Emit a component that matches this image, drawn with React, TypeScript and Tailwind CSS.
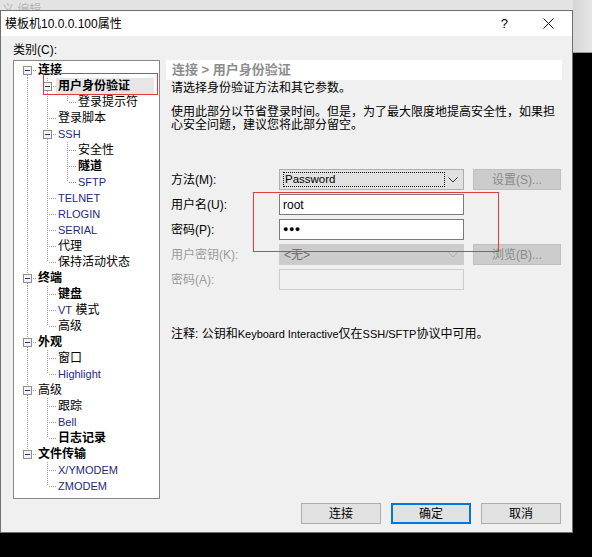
import React from "react";

type N = {
  label: React.ReactNode;
  bold?: boolean;
  en?: boolean;
  selected?: boolean;
  children?: N[];
};

const EN = ({ children }: { children: React.ReactNode }) => (
  <span className="font-['Liberation_Sans',sans-serif] text-[11px] text-[#1e2a78]">{children}</span>
);

const L = ({ children }: { children: React.ReactNode }) => (
  <span className="font-['Liberation_Sans',sans-serif] text-[11px]">{children}</span>
);

const tree: N[] = [
  {
    label: "连接",
    bold: true,
    children: [
      { label: "用户身份验证", bold: true, selected: true, children: [{ label: "登录提示符" }] },
      { label: "登录脚本" },
      {
        label: "SSH",
        en: true,
        children: [{ label: "安全性" }, { label: "隧道", bold: true }, { label: "SFTP", en: true }],
      },
      { label: "TELNET", en: true },
      { label: "RLOGIN", en: true },
      { label: "SERIAL", en: true },
      { label: "代理" },
      { label: "保持活动状态" },
    ],
  },
  {
    label: "终端",
    bold: true,
    children: [
      { label: "键盘", bold: true },
      {
        label: (
          <>
            <EN>VT</EN> 模式
          </>
        ),
      },
      { label: "高级" },
    ],
  },
  { label: "外观", bold: true, children: [{ label: "窗口" }, { label: "Highlight", en: true }] },
  { label: "高级", children: [{ label: "跟踪" }, { label: "Bell", en: true }, { label: "日志记录", bold: true }] },
  { label: "文件传输", bold: true, children: [{ label: "X/YMODEM", en: true }, { label: "ZMODEM", en: true }] },
];

type Flat = { n: N; depth: number; cont: boolean[]; hasNext: boolean; first: boolean };

function flatten(nodes: N[], depth: number, cont: boolean[], out: Flat[]) {
  nodes.forEach((n, i) => {
    const hasNext = i < nodes.length - 1;
    out.push({ n, depth, cont: [...cont], hasNext, first: depth === 0 && i === 0 });
    if (n.children) flatten(n.children, depth + 1, [...cont, hasNext], out);
  });
  return out;
}

const LINE = "#a0a0a0";

function TreeLines({ f }: { f: Flat }) {
  const d = f.depth;
  const w = 20 * (d + 1);
  const cx = 20 * d + 9.5;
  const box = !!f.n.children;
  const els: React.ReactNode[] = [];
  f.cont.forEach((c, i) => {
    if (c)
      els.push(
        <line key={"v" + i} x1={20 * i + 9.5} y1={0} x2={20 * i + 9.5} y2={16} stroke={LINE} strokeDasharray="1 1" />
      );
  });
  if (!f.first)
    els.push(<line key="top" x1={cx} y1={0} x2={cx} y2={box ? 4 : 8} stroke={LINE} strokeDasharray="1 1" />);
  if (f.hasNext)
    els.push(<line key="bot" x1={cx} y1={box ? 13 : 8} x2={cx} y2={16} stroke={LINE} strokeDasharray="1 1" />);
  els.push(
    <line key="h" x1={box ? 20 * d + 15 : cx + 1} y1={8.5} x2={20 * d + 19} y2={8.5} stroke={LINE} strokeDasharray="1 1" />
  );
  if (box) {
    els.push(
      <rect key="b" x={20 * d + 5.5} y={4.5} width={8} height={8} fill="#f4f4f4" stroke="#8f8f8f" />,
      <line key="m" x1={20 * d + 7} y1={8.5} x2={20 * d + 12} y2={8.5} stroke="#24378a" />
    );
  }
  return (
    <svg width={w} height={16} className="shrink-0" shapeRendering="crispEdges">
      {els}
    </svg>
  );
}

function TreeRow({ f }: { f: Flat }) {
  const n = f.n;
  const cls = n.bold ? "font-bold text-black" : "text-black";
  return (
    <div className="flex h-[16px] items-center pl-[4px]">
      <TreeLines f={f} />
      <span
        className={
          "whitespace-nowrap text-[12px] leading-[16px] " +
          cls +
          (n.selected ? " -ml-[2px] w-[98px] bg-[#e6e6e6] pl-[2px]" : "")
        }
      >
        {n.en ? <EN>{n.label}</EN> : n.label}
      </span>
    </div>
  );
}

function Chevron({ color }: { color: string }) {
  return (
    <svg width="10" height="6" viewBox="0 0 10 6">
      <path d="M0.5 0.5 L5 5 L9.5 0.5" fill="none" stroke={color} strokeWidth="1" />
    </svg>
  );
}

function Btn({ children, primary, disabled, w }: { children: React.ReactNode; primary?: boolean; disabled?: boolean; w: string }) {
  return (
    <div
      className={
        "flex h-[21px] items-center justify-center text-[12px] " +
        w +
        " " +
        (disabled
          ? "border border-[#bfbfbf] bg-[#cccccc] text-[#8a8a8a]"
          : primary
          ? "border-2 border-[#0078d7] bg-[#e1e1e1] text-black"
          : "border border-[#adadad] bg-[#e1e1e1] text-black")
      }
    >
      {children}
    </div>
  );
}

export default function App() {
  const flat = flatten(tree, 0, [], []);
  return (
    <div className="flex h-[557px] w-[592px] overflow-hidden bg-black font-['Liberation_Sans','Noto_Sans_CJK_SC',sans-serif] text-[12px] text-black">
      <div className="flex w-[573px] flex-col">
        <div className="h-[10px] overflow-hidden bg-[#e3e3e3] pl-[2px]">
          <div className="pt-[3px] text-[12px] leading-[14px] text-[#b4b4b4]">义 编辑</div>
        </div>
        <div className="flex h-[523px] flex-col border border-[#707070] bg-[#f0f0f0]">
          {/* title bar */}
          <div className="flex h-[25px] items-center bg-white pl-[4px] pr-[18px]">
            <span className="text-[12px]">模板机10.0.0.100属性</span>
            <span className="ml-auto text-[13px] leading-none">?</span>
            <svg width="11" height="11" viewBox="0 0 11 11" className="ml-[35px]">
              <path d="M0.5 0.5 L10.5 10.5 M10.5 0.5 L0.5 10.5" stroke="#111" strokeWidth="1" />
            </svg>
          </div>
          {/* client */}
          <div className="flex flex-1 flex-col">
            <div className="flex">
              <div className="flex flex-col pl-[12px]">
                <div className="mt-[7px] h-[14px] text-[12px] leading-[14px]">类别(C):</div>
                <div className="relative mt-[3px] h-[439px] w-[147px] border border-[#828790] bg-white pt-[1px]">
                  {flat.map((f, i) => (
                    <TreeRow key={i} f={f} />
                  ))}
                  <div className="absolute left-[29px] top-[12px] h-[22px] w-[115px] border border-[#e33b3b]" />
                </div>
              </div>
              <div className="relative ml-[6px] mt-[24px] w-[396px]">
                <div className="h-[20px] bg-white pl-[6px] text-[13px] font-bold leading-[20px] text-[#8c8c8c]">
                  连接 &gt; 用户身份验证
                </div>
                <div className="mt-[1px] pl-[5px] text-[12px] leading-[14px]">请选择身份验证方法和其它参数。</div>
                <div className="mt-[11px] pl-[5px] text-[12px] leading-[13px]">
                  使用此部分以节省登录时间。但是，为了最大限度地提高安全性，如果担
                  <br />
                  心安全问题，建议您将此部分留空。
                </div>
                <div className="mt-[37px] flex flex-col gap-[4px] pl-[5px]">
                  <div className="flex h-[21px] items-center">
                    <span className="w-[108px]">方法(M):</span>
                    <div className="flex h-[21px] w-[185px] items-center border border-[#adadad] bg-[#e1e1e1] pl-[3px] pr-[5px]">
                      <div className="flex h-[15px] w-[162px] items-center border border-dotted border-black pl-[1px] text-[11.5px]">
                        Password
                      </div>
                      <div className="ml-auto">
                        <Chevron color="#333" />
                      </div>
                    </div>
                    <div className="ml-[9px]">
                      <Btn disabled w="w-[88px]">
                        设置(S)...
                      </Btn>
                    </div>
                  </div>
                  <div className="flex h-[21px] items-center">
                    <span className="w-[108px]">用户名(U):</span>
                    <div className="flex h-[21px] w-[185px] items-center border border-[#7a7a7a] bg-white pl-[3px]">root</div>
                  </div>
                  <div className="flex h-[21px] items-center">
                    <span className="w-[108px]">密码(P):</span>
                    <div className="flex h-[21px] w-[185px] items-center border border-[#7a7a7a] bg-white pl-[3px] text-[9px] tracking-[0.5px]">
                      ●●●
                    </div>
                  </div>
                  <div className="flex h-[21px] items-center">
                    <span className="w-[108px] text-[#9a9a9a]">用户密钥(K):</span>
                    <div className="flex h-[21px] w-[185px] items-center border border-[#cccccc] bg-[#cccccc] pl-[4px] pr-[5px] text-[#6f6f6f]">
                      &lt;无&gt;
                      <div className="ml-auto">
                        <Chevron color="#b0b0b0" />
                      </div>
                    </div>
                    <div className="ml-[9px]">
                      <Btn disabled w="w-[88px]">
                        浏览(B)...
                      </Btn>
                    </div>
                  </div>
                  <div className="flex h-[21px] items-center">
                    <span className="w-[108px] text-[#9a9a9a]">密码(A):</span>
                    <div className="h-[21px] w-[185px] border border-[#cccccc] bg-[#f0f0f0]" />
                  </div>
                </div>
                <div className="mt-[37px] pl-[5px] text-[12px] leading-[14px]">
                  注释: 公钥和<L>Keyboard Interactive</L>仅在<L>SSH/SFTP</L>协议中可用。
                </div>
                <div className="absolute left-[87px] top-[132px] h-[60px] w-[246px] border border-[#e33b3b]" />
              </div>
            </div>
            <div className="mt-[4px] flex justify-end gap-[10px] pr-[11px]">
              <Btn w="w-[80px]">连接</Btn>
              <Btn primary w="w-[80px]">
                确定
              </Btn>
              <Btn w="w-[80px]">取消</Btn>
            </div>
          </div>
        </div>
      </div>
      <div className="flex w-[19px] flex-col">
        <div className="h-[52px] bg-gradient-to-r from-[#d6d6d6] to-[#e6e6e6]" />
        <div className="h-[1px] bg-[#9a9a9a]" />
      </div>
    </div>
  );
}
